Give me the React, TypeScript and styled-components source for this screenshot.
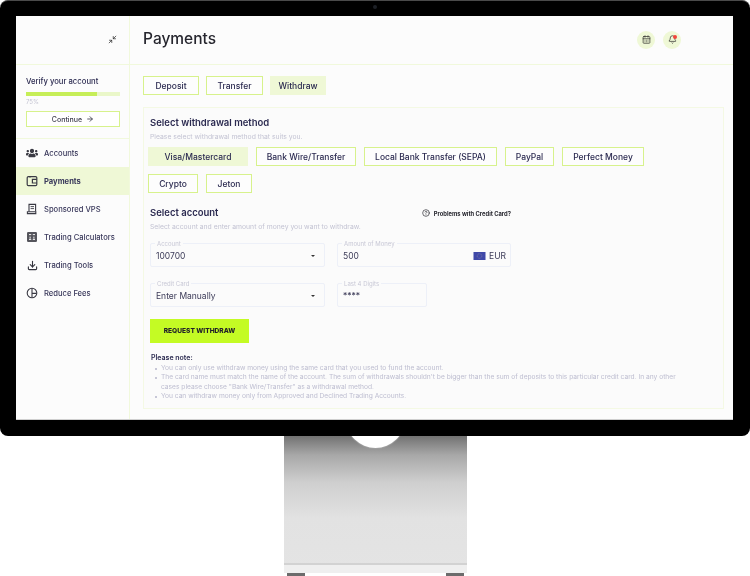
import React from "react";
import styled, {createGlobalStyle} from "styled-components";
import {ArrowRight, Bell, CalendarDays, CircleHelp, Download, Minimize2} from "lucide-react";
import {FaUsers} from "react-icons/fa";

const GlobalStyle = createGlobalStyle`
  html, body {
    margin: 0;
    background: #fff;
    font-family: "Inter", "Liberation Sans", sans-serif;
    color: #2b2a50;
  }
  * {
    box-sizing: border-box;
  }
`

const WalletIcon = () => (
   <NavSvg viewBox="0 0 12 12" fill="none" stroke="#3a3a44" strokeWidth="1.2">
      <rect x="1.2" y="1.6" width="9.6" height="9" rx="1.2"/>
      <path d="M10.8 4.4H6.4v3.6h4.4"/>
      <path d="M4 1.6v1.2" strokeWidth=".8"/>
   </NavSvg>
);

const ServerIcon = () => (
   <NavSvg viewBox="0 0 12 12" fill="none" stroke="#3a3a44" strokeWidth="1.1">
      <path d="M3 8.6V1.4h6.6v7.2"/>
      <path d="M1.4 8.8h8.4v1.8H1.4z"/>
      <path d="M4.6 3.6h3.4M4.6 5.6h3.4" strokeWidth=".9"/>
   </NavSvg>
);

const CalcIcon = () => (
   <NavSvg viewBox="0 0 12 12">
      <rect x="1" y="1" width="10" height="10" rx="1.2" fill="#55555c"/>
      <path d="M3 3.6h2.2M6.8 3.6H9M3 8.4h2.2M6.8 8.4H9M4.1 5.6v2M7.9 5.6v2" stroke="#f5f5f5" strokeWidth="1"/>
   </NavSvg>
);

const FeesIcon = () => (
   <NavSvg viewBox="0 0 12 12" fill="none" stroke="#3a3a44" strokeWidth="1.1">
      <circle cx="6" cy="6" r="4.8"/>
      <path d="M6 1.2v9.6M6 6.4h4.6"/>
   </NavSvg>
);

const navItems = [
   {label: 'Accounts', icon: <FaUsers size={12} color="#3a3a44"/>},
   {label: 'Payments', icon: <WalletIcon/>, active: true},
   {label: 'Sponsored VPS', icon: <ServerIcon/>},
   {label: 'Trading Calculators', icon: <CalcIcon/>},
   {label: 'Trading Tools', icon: <Download size={11} strokeWidth={2.4} color="#33333c"/>},
   {label: 'Reduce Fees', icon: <FeesIcon/>},
];

const methods = [
   {label: 'Visa/Mastercard', width: 100, active: true},
   {label: 'Bank Wire/Transfer', width: 100},
   {label: 'Local Bank Transfer (SEPA)', width: 133},
   {label: 'PayPal', width: 49},
   {label: 'Perfect Money', width: 82},
   {label: 'Crypto', width: 50},
   {label: 'Jeton', width: 46},
];

export default function App() {
   return (
      <Page>
         <GlobalStyle/>
         <Bezel>
            <Camera/>
            <Screen>
               <Sidebar>
                  <LogoBar>
                     <Minimize2 size={9} strokeWidth={2} color="#333"/>
                  </LogoBar>
                  <Verify>
                     <VerifyTitle>Verify your account</VerifyTitle>
                     <Progress><ProgressFill/></Progress>
                     <ProgressText>75%</ProgressText>
                     <ContinueButton>Continue <ArrowRight size={8} strokeWidth={2.5}/></ContinueButton>
                  </Verify>
                  <Nav>
                     {navItems.map(({label, icon, active}) => (
                        <NavItem key={label} $active={active}>
                           <NavIconBox>{icon}</NavIconBox>
                           {label}
                        </NavItem>
                     ))}
                  </Nav>
               </Sidebar>
               <Main>
                  <Header>
                     <Title>Payments</Title>
                     <HeaderIcons>
                        <RoundIcon><CalendarDays size={9} strokeWidth={2}/></RoundIcon>
                        <RoundIcon>
                           <Bell size={9} strokeWidth={2}/>
                           <RedDot/>
                        </RoundIcon>
                     </HeaderIcons>
                  </Header>
                  <Content>
                     <Tabs>
                        <Chip $width={56}>Deposit</Chip>
                        <Chip $width={57}>Transfer</Chip>
                        <Chip $width={56} $active>Withdraw</Chip>
                     </Tabs>
                     <Card>
                        <SectionTitle>Select withdrawal method</SectionTitle>
                        <SectionText>Please select withdrawal method that suits you.</SectionText>
                        <Methods>
                           {methods.map(m => (
                              <Chip key={m.label} $width={m.width} $active={m.active}>{m.label}</Chip>
                           ))}
                        </Methods>
                        <AccountHead>
                           <SectionTitle>Select account</SectionTitle>
                           <HelpLink><CircleHelp size={8} strokeWidth={2}/>Problems with Credit Card?</HelpLink>
                        </AccountHead>
                        <SectionText>Select account and enter amount of money you want to withdraw.</SectionText>
                        <FieldRow $top={12}>
                           <Field $width={175}>
                              <FieldLabel>Account</FieldLabel>
                              100700
                              <Caret/>
                           </Field>
                           <Field $width={174}>
                              <FieldLabel>Amount of Money</FieldLabel>
                              500
                              <Currency>
                                 <Flag viewBox="0 0 12 8">
                                    <rect width="12" height="8" fill="#3f48a8"/>
                                    <circle cx="6" cy="4" r="2.3" fill="none" stroke="#8a84a0" strokeWidth=".7" strokeDasharray=".8 .6"/>
                                 </Flag>
                                 EUR
                              </Currency>
                           </Field>
                        </FieldRow>
                        <FieldRow $top={16}>
                           <Field $width={175}>
                              <FieldLabel>Credit Card</FieldLabel>
                              Enter Manually
                              <Caret/>
                           </Field>
                           <Field $width={90}>
                              <FieldLabel>Last 4 Digits</FieldLabel>
                              ****
                           </Field>
                        </FieldRow>
                        <SubmitButton>REQUEST WITHDRAW</SubmitButton>
                        <NoteTitle>Please note:</NoteTitle>
                        <NoteList>
                           <li>You can only use withdraw money using the same card that you used to fund the account.</li>
                           <li>The card name must match the name of the account. The sum of withdrawals shouldn't be bigger than the sum of deposits to this particular credit card. In any other cases please choose "Bank Wire/Transfer" as a withdrawal method.</li>
                           <li>You can withdraw money only from Approved and Declined Trading Accounts.</li>
                        </NoteList>
                     </Card>
                  </Content>
               </Main>
            </Screen>
         </Bezel>
         <Stand>
            <Notch/>
            <StandBase/>
         </Stand>
         <Feet>
            <Foot/>
            <Foot/>
         </Feet>
      </Page>
   );
}

const Page = styled.div`
  width: 750px;
  height: 576px;
  overflow: hidden;
  display: flex;
  flex-direction: column;
  align-items: center;
`
const Bezel = styled.div`
  position: relative;
  flex: none;
  width: 750px;
  height: 436px;
  padding: 16px 17px 16px 16px;
  background: #000;
  border-top: 1px solid #4a4a4a;
  border-radius: 8px;
`
const Camera = styled.div`
  position: absolute;
  top: 4px;
  left: 373px;
  width: 4px;
  height: 4px;
  border-radius: 50%;
  background: #1d2026;
`
const Screen = styled.div`
  display: flex;
  height: 404px;
  margin-top: -1px;
  background: #fcfcfc;
  border-bottom: 1px solid #cfcfcf;
  filter: blur(.3px);
`
const Sidebar = styled.aside`
  flex: none;
  width: 114px;
  border-right: 1px solid #f1f9dc;
`
const LogoBar = styled.div`
  height: 49px;
  padding: 19px 12px 0 0;
  display: flex;
  justify-content: flex-end;
  align-items: flex-start;
  border-bottom: 1px solid #f1f9dc;
`
const Verify = styled.div`
  height: 74px;
  padding: 12px 9px 0 10px;
  border-bottom: 1px solid #f1f9dc;
`
const VerifyTitle = styled.div`
  font-size: 7.7px;
  line-height: 10px;
  font-weight: 500;
`
const Progress = styled.div`
  height: 4px;
  margin-top: 5px;
  background: #eaf7c9;
`
const ProgressFill = styled.div`
  width: 75%;
  height: 100%;
  background: #c6ee58;
`
const ProgressText = styled.div`
  margin-top: 2px;
  font-size: 6px;
  line-height: 8px;
  color: #c4c4d2;
`
const ContinueButton = styled.div`
  height: 16px;
  margin-top: 5px;
  display: flex;
  align-items: center;
  justify-content: center;
  gap: 4px;
  border: 1px solid #d7f28c;
  background: #fff;
  font-size: 7px;
  font-weight: 500;
  color: #3c3c4c;
`
const Nav = styled.nav`
  margin-top: 0;
`
const NavItem = styled.div<{$active?: boolean}>`
  height: 28px;
  padding-left: 10px;
  display: flex;
  align-items: center;
  gap: 6px;
  font-size: 7.6px;
  font-weight: ${props => props.$active ? 700 : 500};
  background: ${props => props.$active ? '#eff8d6' : 'transparent'};
  color: #38375a;
`
const NavIconBox = styled.span`
  width: 12px;
  height: 12px;
  display: flex;
  align-items: center;
  justify-content: center;
`
const NavSvg = styled.svg`
  width: 12px;
  height: 12px;
`
const Main = styled.main`
  flex: 1;
  min-width: 0;
`
const Header = styled.header`
  height: 49px;
  padding: 0 52px 0 13px;
  display: flex;
  align-items: center;
  justify-content: space-between;
  border-bottom: 1px solid #f1f9dc;
`
const Title = styled.h1`
  margin: 0 0 3px;
  font-size: 15.5px;
  font-weight: 500;
  color: #26262e;
`
const HeaderIcons = styled.div`
  display: flex;
  gap: 8px;
  margin-bottom: 1px;
`
const RoundIcon = styled.div`
  position: relative;
  width: 18px;
  height: 18px;
  display: flex;
  align-items: center;
  justify-content: center;
  border-radius: 50%;
  background: #eff8d6;
  color: #3a3a34;
`
const RedDot = styled.span`
  position: absolute;
  top: 4px;
  right: 4px;
  width: 4px;
  height: 4px;
  border-radius: 50%;
  background: #f2443b;
`
const Content = styled.div`
  padding: 11px 9px 0 13px;
`
const Tabs = styled.div`
  display: flex;
  gap: 7px;
`
const Chip = styled.div<{$width: number; $active?: boolean}>`
  width: ${props => props.$width}px;
  height: 19px;
  display: flex;
  align-items: center;
  justify-content: center;
  border: 1px solid ${props => props.$active ? '#eff8d6' : '#d7f28c'};
  background: ${props => props.$active ? '#eff8d6' : '#fdfdfd'};
  font-size: 8.5px;
  font-weight: 500;
  white-space: nowrap;
  color: #2b2a50;
`
const Card = styled.section`
  height: 302px;
  margin-top: 12px;
  padding: 9px 6px 0 6px;
  border: 1px solid #f4f9e4;
  background: #fbfbfb;
`
const SectionTitle = styled.h2`
  margin: 0;
  font-size: 9.5px;
  line-height: 12px;
  font-weight: 600;
  color: #2b2a50;
`
const SectionText = styled.p`
  margin: 3px 0 0;
  font-size: 6.8px;
  line-height: 9px;
  color: #c3c3d3;
`
const Methods = styled.div`
  display: flex;
  flex-wrap: wrap;
  gap: 8px;
  margin: 6px 0 0 -2px;
  width: 520px;
`
const AccountHead = styled.div`
  margin-top: 14px;
  display: flex;
  align-items: center;
  justify-content: space-between;
  width: 361px;
`
const HelpLink = styled.div`
  display: flex;
  align-items: center;
  gap: 4px;
  font-size: 5.8px;
  font-weight: 700;
  color: #26262e;
`
const FieldRow = styled.div<{$top: number}>`
  display: flex;
  gap: 12px;
  margin-top: ${props => props.$top}px;
`
const Field = styled.div<{$width: number}>`
  position: relative;
  width: ${props => props.$width}px;
  height: 24px;
  padding: 2px 5px 0;
  display: flex;
  align-items: center;
  border: 1px solid #edf0f8;
  border-radius: 2px;
  font-size: 8.5px;
  color: #3c3b58;
`
const FieldLabel = styled.span`
  position: absolute;
  top: -4px;
  left: 4px;
  padding: 0 2px;
  background: #fbfbfb;
  font-size: 6px;
  line-height: 7px;
  color: #c8c8d6;
`
const Caret = styled.span`
  position: absolute;
  right: 9px;
  top: 11px;
  border: 2px solid transparent;
  border-top: 2px solid #333;
`
const Currency = styled.div`
  margin: 0 -1px 0 auto;
  display: flex;
  align-items: center;
  gap: 3px;
`
const Flag = styled.svg`
  width: 13px;
  height: 8px;
`
const SubmitButton = styled.div`
  width: 99px;
  height: 24px;
  margin-top: 12px;
  display: flex;
  align-items: center;
  justify-content: center;
  background: #c4fb24;
  font-size: 6.6px;
  font-weight: 800;
  color: #22222a;
`
const NoteTitle = styled.div`
  margin: 9px 0 0 1px;
  padding-top: 1px;
  font-size: 7px;
  line-height: 9px;
  font-weight: 600;
  color: #2b2a50;
`
const NoteList = styled.ul`
  margin: 2px 0 0;
  padding: 0 0 0 11px;
  width: 530px;
  list-style: none;
  font-size: 6.65px;
  line-height: 9.4px;
  color: #bdbdd0;

  li {
    position: relative;
  }

  li::before {
    content: "";
    position: absolute;
    left: -6px;
    top: 4px;
    width: 1.5px;
    height: 1.5px;
    border-radius: 50%;
    background: #bdbdd0;
  }
`
const Stand = styled.div`
  position: relative;
  flex: none;
  width: 183px;
  height: 137px;
  overflow: hidden;
  background: linear-gradient(#727272, #a8a8a8 14%, #cfcfcf 34%, #e2e2e2 60%, #e4e4e4);
`
const Notch = styled.div`
  position: absolute;
  top: -47px;
  left: 62px;
  width: 59px;
  height: 59px;
  border-radius: 50%;
  background: #fff;
  box-shadow: 0 1px 1px #a0a0a0;
`
const StandBase = styled.div`
  position: absolute;
  left: 0;
  right: 0;
  bottom: 0;
  height: 10px;
  border-top: 2px solid #d2d2d2;
  background: #efefef;
`
const Feet = styled.div`
  flex: none;
  width: 177px;
  display: flex;
  justify-content: space-between;
`
const Foot = styled.div`
  width: 18px;
  height: 3px;
  background: #6c6c6c;
`
